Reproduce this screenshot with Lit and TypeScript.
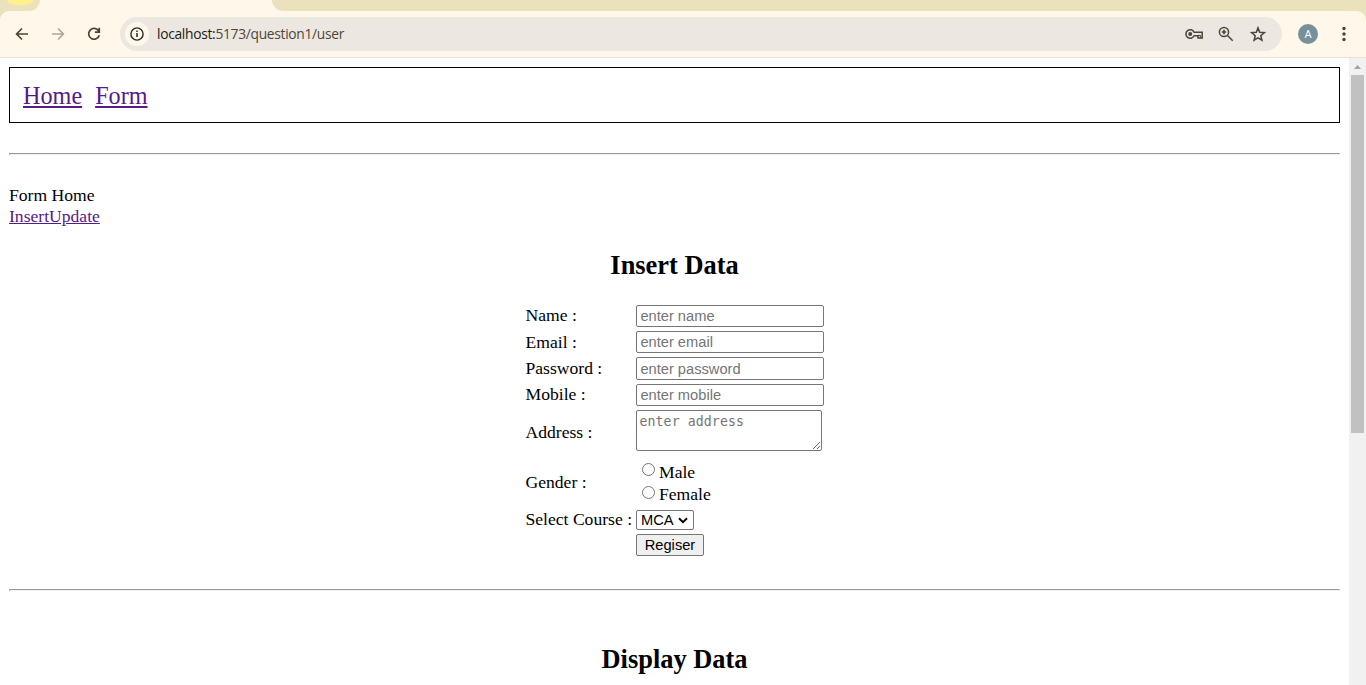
import { LitElement, html, css } from "lit";
import { customElement } from "lit/decorators.js";

@customElement("browser-bar")
class BrowserBar extends LitElement {
  static styles = css`
    :host { display: block; background: #ebe2bd; height: 58px; }
    .tabs { display: flex; height: 11px; background: #fff8ea; }
    .before { width: 40px; background: #ebe2bd; border-bottom-right-radius: 11px; box-sizing: border-box; padding-left: 7px; }
    .pill { width: 26px; height: 5px; background: #fff08e; border-radius: 0 0 9px 9px / 0 0 5px 5px; }
    .active { width: 232px; }
    .after { flex: 1; background: #ebe2bd; border-bottom-left-radius: 11px; }
    .bar { display: flex; align-items: center; height: 47px; box-sizing: border-box; background: #fff8ea;
      border-radius: 9px 9px 0 0; border-bottom: 1px solid #e9e2d2; padding: 0 0 0 14px; }
    svg { display: block; flex: none; }
    .nav { display: flex; gap: 20px; width: 106px; flex: none; }
    .address { display: flex; align-items: center; width: 1162px; height: 34px; border-radius: 17px; background: #ece7e0;
      box-sizing: border-box; padding: 0 15px 0 5px; flex: none; }
    .info { display: flex; align-items: center; justify-content: center; width: 24px; height: 24px; border-radius: 50%; background: #fff8ea; }
    .url { margin-left: 8px; flex: 1; font: 13.8px/20px "Open Sans", "Noto Sans", sans-serif; letter-spacing: -0.3px; color: #4c473a; white-space: nowrap; }
    .host { color: #1d1b16; }
    .tools { display: flex; gap: 14px; }
    .key { margin-right: -1px; }
    .avatar { width: 20px; height: 20px; border-radius: 50%; background: #78909c; color: #fff; margin-left: 16px;
      font: 11px/21px Roboto, sans-serif; text-align: center; flex: none; }
    .menu { margin-left: 17px; }
  `;
  render() {
    return html`
      <div class="tabs"><div class="before"><div class="pill"></div></div><div class="active"></div><div class="after"></div></div>
      <div class="bar">
        <div class="nav">
          <svg width="16" height="16" viewBox="0 0 16 16" fill="none" stroke="#4a4530" stroke-width="1.7"><path d="M14 8H3M8 2.5 2.6 8 8 13.5"/></svg>
          <svg width="16" height="16" viewBox="0 0 16 16" fill="none" stroke="#aaa695" stroke-width="1.6"><path d="M2 8h11M8 2.5 13.4 8 8 13.5"/></svg>
          <svg width="16" height="16" viewBox="0 0 16 16" fill="none" stroke="#4a4530" stroke-width="1.7"><path d="M12.7 5A5.4 5.4 0 1 0 13.3 9.2M13.3 1.8v4.4H8.9"/></svg>
        </div>
        <div class="address">
          <div class="info"><svg width="14" height="14" viewBox="0 0 14 14"><circle cx="7" cy="7" r="6.1" fill="none" stroke="#2b2922" stroke-width="1.4"/><path d="M7 6.1v4M7 3.5v1.5" stroke="#2b2922" stroke-width="1.5"/></svg></div>
          <div class="url"><span class="host">localhost:</span>5173/question1/user</div>
          <div class="tools">
            <svg class="key" width="20" height="18" viewBox="0 0 20 18" fill="none" stroke="#4a4638" stroke-width="1.5"><path d="M10.1 7.2a4.3 4.3 0 1 0 0 3.6h3.9v2.2h4.2V7.2z"/><path d="M14 10.4h2.4v2.4" stroke-width="1"/><circle cx="6.2" cy="9" r="2" fill="#4a4638" stroke="none"/></svg>
            <svg width="18" height="18" viewBox="0 0 18 18" fill="none" stroke="#4a4638" stroke-width="1.5"><circle cx="7" cy="7" r="4.6"/><path d="m10.3 10.3 5.4 5.4"/><path d="M4.8 7h4.4M7 4.8v4.4" stroke-width="1.7"/></svg>
            <svg width="18" height="18" viewBox="0 0 18 18" fill="none" stroke="#4a4638" stroke-width="1.5"><path d="m9 2.9 1.7 4.3 4.7.4-3.6 3.1 1.1 4.5L9 12.8l-3.9 2.4 1.1-4.5-3.6-3.1 4.7-.4z"/></svg>
          </div>
        </div>
        <div class="avatar">A</div>
        <svg class="menu" width="18" height="18" viewBox="0 0 18 18" fill="#4a4530"><circle cx="9" cy="3.5" r="1.7"/><circle cx="9" cy="9" r="1.7"/><circle cx="9" cy="14.5" r="1.7"/></svg>
      </div>`;
  }
}

@customElement("scroll-track")
class ScrollTrack extends LitElement {
  static styles = css`
    :host { display: block; width: 17px; background: #f1f1f1; }
    .arrow { display: block; height: 17px; }
    .thumb { width: 13px; height: 358px; margin: 0 2px; background: #c1c1c1; }
  `;
  render() {
    return html`<svg class="arrow" width="17" height="17" viewBox="0 0 17 17"><path d="M8.5 7 5 11h7z" fill="#a3a3a3"/></svg><div class="thumb"></div>`;
  }
}

@customElement("app-root")
class AppRoot extends LitElement {
  static styles = css`
    :host { display: flex; flex-direction: column; width: 1366px; height: 685px; overflow: hidden; background: #fff; color: #000;
      font: 17.6px/21px "Liberation Serif", "Times New Roman", serif; }
    .view { display: flex; flex: 1; min-height: 0; }
    .page { flex: 1; padding: 9px 9px 0; overflow: hidden; }
    a { color: #551a8b; text-decoration: underline; }
    nav { display: flex; gap: 13px; align-items: center; height: 56px; box-sizing: border-box; border: 1px solid #000; padding: 2px 13px 0; font-size: 24.2px; line-height: 28px; }
    .rule { height: 2px; box-sizing: border-box; border: 1px solid; border-color: #9a9a9a #eee #eee #9a9a9a; }
    .first { margin-top: 30px; }
    .intro { margin-top: 30px; }
    h2 { margin: 0; text-align: center; font-size: 26.4px; line-height: 30px; }
    .insert { margin-top: 23px; }
    .form { display: grid; grid-template-columns: 107px 189px; column-gap: 4px; row-gap: 4px; width: 300px;
      grid-template-rows: 22px 22px 23px 22px 41px 51px 20px 22px; margin: 25px 0 0 516px; align-items: center; }
    .label { white-space: nowrap; padding-left: .5px; }
    .raised { padding-bottom: 2px; }
    .lowered { padding-top: 4px; }
    input.text, textarea, select, button { box-sizing: border-box; margin: 0; border: 1px solid #767676; border-radius: 2px; font: 14.67px "Liberation Sans", Arial, sans-serif; background: #fff; color: #000; }
    input.text { width: 188px; height: 100%; padding: 1px 3.4px; outline: 0; }
    textarea { display: block; width: 186px; height: 41px; padding: 2px 2.5px; font: 13.2px/17px "DejaVu Sans Mono", monospace; letter-spacing: 0.1px; overflow: hidden; }
    ::placeholder { color: #757575; opacity: 1; }
    .choices { padding: 6px 0 0 6px; }
    .choice { display: flex; align-items: center; height: 22px; gap: 4px; }
    .choice input { appearance: none; width: 13px; height: 13px; margin: 0 0 4px; border: 1px solid #767676; border-radius: 50%; background: #fff; }
    .choice:first-child input { margin-bottom: 6px; }
    .picker { display: grid; width: 58px; height: 20px; }
    .picker > * { grid-area: 1 / 1; }
    select { appearance: none; width: 58px; height: 20px; padding: 0 4px; }
    .chevron { justify-self: end; align-self: center; margin-right: 6px; pointer-events: none; }
    button { width: 68px; height: 22px; padding: 0; background: #efefef; }
    .second { margin-top: 33px; }
    .display { margin-top: 53px; }
  `;
  private field(label: string, placeholder: string, type = "text", raised = false) {
    return html`<label class="label ${raised ? "raised" : ""}">${label} :</label><input class="text" type=${type} placeholder=${placeholder} />`;
  }
  render() {
    return html`
      <browser-bar></browser-bar>
      <div class="view">
        <main class="page">
          <nav><a href="#">Home</a><a href="#">Form</a></nav>
          <div class="rule first"></div>
          <div class="intro">Form Home<br /><a href="#">InsertUpdate</a></div>
          <h2 class="insert">Insert Data</h2>
          <div class="form">
            ${this.field("Name", "enter name", "text", true)}
            ${this.field("Email", "enter email")}
            ${this.field("Password", "enter password", "password")}
            ${this.field("Mobile", "enter mobile", "text", true)}
            <label class="label lowered">Address :</label><textarea placeholder="enter address"></textarea>
            <span class="label lowered">Gender :</span>
            <div class="choices">
              <label class="choice"><input type="radio" name="gender" />Male</label>
              <label class="choice"><input type="radio" name="gender" />Female</label>
            </div>
            <label class="label raised">Select Course :</label>
            <div class="picker"><select><option>MCA</option></select>
              <svg class="chevron" width="10" height="7" viewBox="0 0 10 7" fill="none" stroke="#000" stroke-width="2"><path d="m1 1.2 4 3.9 4-3.9"/></svg></div>
            <span></span><button>Regiser</button>
          </div>
          <div class="rule second"></div>
          <h2 class="display">Display Data</h2>
        </main>
        <scroll-track></scroll-track>
      </div>`;
  }
}
